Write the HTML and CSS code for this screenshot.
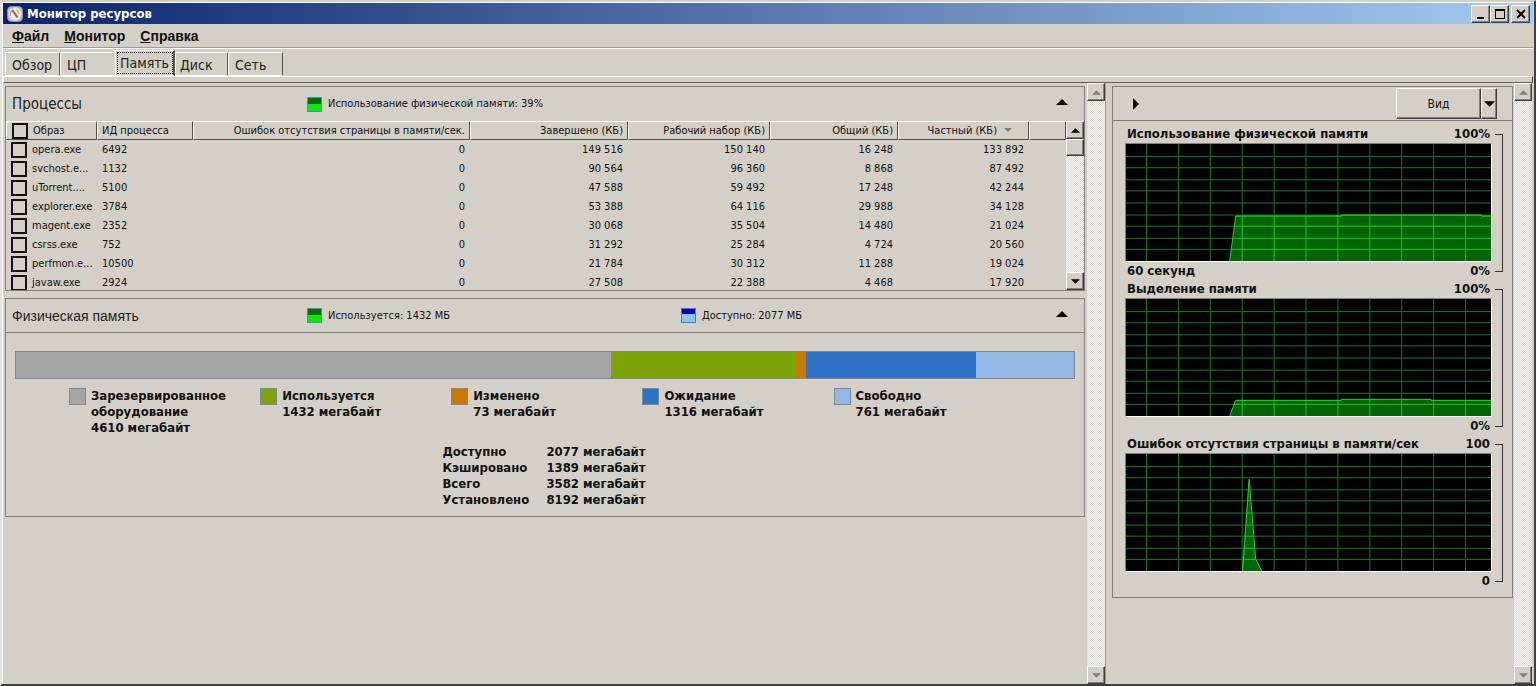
FILE: index.html
```html
<!DOCTYPE html>
<html lang="ru">
<head>
<meta charset="utf-8">
<title>Монитор ресурсов</title>
<link rel="stylesheet" href="styles.css">
</head>
<body>
<svg class="defs" aria-hidden="true">
  <defs>
    <path id="grid" vector-effect="non-scaling-stroke" d="M0 12.500H366M0 23.500H366M0 35.500H366M0 46.500H366M0 58.500H366M0 70.500H366M0 81.500H366M0 93.500H366M0 104.500H366M20.500 0V116M52.500 0V116M84.500 0V116M116.500 0V116M148.500 0V116M180.500 0V116M212.500 0V116M244.500 0V116M276.500 0V116M308.500 0V116M340.500 0V116"/>
    <symbol id="up" viewBox="0 0 10 5"><path d="M0 5 5 0l5 5z"/></symbol>
    <symbol id="down" viewBox="0 0 10 5"><path d="M0 0h10L5 5z"/></symbol>
  </defs>
</svg>
<div class="window">
  <header class="titlebar">
    <svg class="app-icon" viewBox="0 0 16 16" aria-hidden="true">
      <rect x="0.500" y="0.500" width="15" height="15" rx="4" fill="#b9bfc9" stroke="#8790a4"/>
      <circle cx="8" cy="8" r="6.300" fill="#f4efec" stroke="#d8d8dc"/>
      <path d="M3.500 10A5 5 0 0 1 6 3.800" fill="none" stroke="#9c9da3" stroke-width="1.500"/>
      <path d="M6 3.500 11.500 11l-2 1L4.800 5z" fill="#b4533d"/>
      <path d="M9 4q3 1 3 4" fill="none" stroke="#d9ad9b" stroke-width="1.500"/>
    </svg>
    <h1 class="title">Монитор ресурсов</h1>
    <div class="window-buttons">
      <button class="raised win-btn" aria-label="Свернуть"><svg viewBox="0 0 12 12"><path d="M2 9h7v2H2z"/></svg></button>
      <button class="raised win-btn" aria-label="Развернуть"><svg viewBox="0 0 12 12"><path fill-rule="evenodd" d="M1 1h10v10H1zM2 3v7h8V3z"/></svg></button>
      <button class="raised win-btn win-close" aria-label="Закрыть"><svg viewBox="0 0 12 12"><path d="M2 2 10 10M10 2 2 10" fill="none" stroke="#000" stroke-width="2"/></svg></button>
    </div>
  </header>
  <nav class="menu" aria-label="Меню">
    <button class="menu-item"><u>Ф</u>айл</button>
    <button class="menu-item"><u>М</u>онитор</button>
    <button class="menu-item"><u>С</u>правка</button>
  </nav>
  <div class="tabs" role="tablist">
    <button class="tab" role="tab">Обзор</button>
    <button class="tab tab-cpu" role="tab">ЦП</button>
    <button class="tab tab-active" role="tab" aria-selected="true">Память</button>
    <button class="tab tab-disk" role="tab">Диск</button>
    <button class="tab" role="tab">Сеть</button>
  </div>
  <div class="tab-edge"></div>
  <main class="content">
    <div class="left">
      <section class="panel">
        <header class="panel-head">
          <h2 class="panel-title">Процессы</h2>
          <span class="metric"><i class="meter"></i>Использование физической памяти: 39%</span>
          <button class="collapse" aria-label="Свернуть процессы"><svg><use href="#up"/></svg></button>
        </header>
        <div class="list">
          <div class="table-clip">
          <table class="processes">
            <colgroup><col class="c-image"><col class="c-pid"><col class="c-faults"><col class="c-commit"><col class="c-set"><col class="c-shared"><col class="c-private"><col></colgroup>
            <thead><tr>
              <th class="text"><label class="pick"><input type="checkbox">Образ</label></th>
              <th class="text">ИД процесса</th>
              <th>Ошибок отсутствия страницы в памяти/сек.</th>
              <th>Завершено (КБ)</th>
              <th>Рабочий набор (КБ)</th>
              <th>Общий (КБ)</th>
              <th class="sorted">Частный (КБ)<svg class="sort"><use href="#down"/></svg></th>
              <th></th>
            </tr></thead>
            <tbody>
              <tr><td class="text"><label class="pick"><input type="checkbox">opera.exe</label></td><td class="text">6492</td><td>0</td><td>149 516</td><td>150 140</td><td>16 248</td><td>133 892</td><td></td></tr>
              <tr><td class="text"><label class="pick"><input type="checkbox">svchost.e...</label></td><td class="text">1132</td><td>0</td><td>90 564</td><td>96 360</td><td>8 868</td><td>87 492</td><td></td></tr>
              <tr><td class="text"><label class="pick"><input type="checkbox">uTorrent....</label></td><td class="text">5100</td><td>0</td><td>47 588</td><td>59 492</td><td>17 248</td><td>42 244</td><td></td></tr>
              <tr><td class="text"><label class="pick"><input type="checkbox">explorer.exe</label></td><td class="text">3784</td><td>0</td><td>53 388</td><td>64 116</td><td>29 988</td><td>34 128</td><td></td></tr>
              <tr><td class="text"><label class="pick"><input type="checkbox">magent.exe</label></td><td class="text">2352</td><td>0</td><td>30 068</td><td>35 504</td><td>14 480</td><td>21 024</td><td></td></tr>
              <tr><td class="text"><label class="pick"><input type="checkbox">csrss.exe</label></td><td class="text">752</td><td>0</td><td>31 292</td><td>25 284</td><td>4 724</td><td>20 560</td><td></td></tr>
              <tr><td class="text"><label class="pick"><input type="checkbox">perfmon.e...</label></td><td class="text">10500</td><td>0</td><td>21 784</td><td>30 312</td><td>11 288</td><td>19 024</td><td></td></tr>
              <tr><td class="text"><label class="pick"><input type="checkbox">javaw.exe</label></td><td class="text">2924</td><td>0</td><td>27 508</td><td>22 388</td><td>4 468</td><td>17 920</td><td></td></tr>
            </tbody>
          </table>
          </div>
          <div class="scrollbar">
            <button class="raised scroll-btn" aria-label="Вверх"><svg><use href="#up"/></svg></button>
            <div class="raised thumb"></div>
            <button class="raised scroll-btn scroll-end" aria-label="Вниз"><svg><use href="#down"/></svg></button>
          </div>
        </div>
      </section>
      <section class="panel">
        <header class="panel-head ruled">
          <h2 class="panel-title title-arial">Физическая память</h2>
          <span class="metric"><i class="meter"></i>Используется: 1432 МБ</span>
          <span class="metric"><i class="meter meter-blue"></i>Доступно: 2077 МБ</span>
          <button class="collapse" aria-label="Свернуть физическую память"><svg><use href="#up"/></svg></button>
        </header>
        <div class="memory">
          <div class="bar">
            <div class="gray" style="flex-grow:4610"></div>
            <div class="green" style="flex-grow:1432"></div>
            <div class="orange" style="flex-grow:73"></div>
            <div class="blue" style="flex-grow:1316"></div>
            <div class="pale" style="flex-grow:761"></div>
          </div>
          <ul class="legend">
            <li><i class="swatch gray"></i><span>Зарезервированное<br>оборудование<br>4610 мегабайт</span></li>
            <li><i class="swatch green"></i><span>Используется<br>1432 мегабайт</span></li>
            <li><i class="swatch orange"></i><span>Изменено<br>73 мегабайт</span></li>
            <li><i class="swatch blue"></i><span>Ожидание<br>1316 мегабайт</span></li>
            <li><i class="swatch pale"></i><span>Свободно<br>761 мегабайт</span></li>
          </ul>
          <dl class="stats">
            <dt>Доступно</dt><dd>2077 мегабайт</dd>
            <dt>Кэшировано</dt><dd>1389 мегабайт</dd>
            <dt>Всего</dt><dd>3582 мегабайт</dd>
            <dt>Установлено</dt><dd>8192 мегабайт</dd>
          </dl>
        </div>
      </section>
    </div>
    <div class="scrollbar disabled">
      <button class="raised scroll-btn" disabled aria-label="Вверх"><svg><use href="#up"/></svg></button>
      <button class="raised scroll-btn scroll-end" disabled aria-label="Вниз"><svg><use href="#down"/></svg></button>
    </div>
    <div class="splitter"></div>
    <aside class="right">
      <section class="panel">
        <header class="panel-head ruled graph-head">
          <button class="expand" aria-label="Скрыть диаграммы"><svg viewBox="0 0 6 12"><path d="M0 0 6 6 0 12z"/></svg></button>
          <div class="view">
            <button class="raised view-btn">Вид</button>
            <button class="raised view-drop" aria-label="Размер диаграмм"><svg><use href="#down"/></svg></button>
          </div>
        </header>
        <div class="graphs">
          <figure class="graph">
            <figcaption class="graph-row"><span>Использование физической памяти</span><span>100%</span></figcaption>
            <svg class="chart" viewBox="0 0 366 116" preserveAspectRatio="none">
              <clipPath id="a1"><path d="M104 116 110 71H216V70H357V71H366V116z"/></clipPath>
              <use href="#grid" class="grid"/>
              <g clip-path="url(#a1)"><rect class="area" width="366" height="116"/><use href="#grid" class="grid-lit"/></g>
              <path class="trace" d="M104 116 110 71.500H216V70.500H357V71.500H366"/>
            </svg>
            <div class="graph-row"><span>60 секунд</span><span>0%</span></div>
            <i class="bracket"></i>
          </figure>
          <figure class="graph">
            <figcaption class="graph-row"><span>Выделение памяти</span><span>100%</span></figcaption>
            <svg class="chart" viewBox="0 0 366 116" preserveAspectRatio="none">
              <clipPath id="a2"><path d="M104 116 110 100H216V99H306V100H366V116z"/></clipPath>
              <use href="#grid" class="grid"/>
              <g clip-path="url(#a2)"><rect class="area" width="366" height="116"/><use href="#grid" class="grid-lit"/></g>
              <path class="trace" d="M104 116 110 100.500H216V99.500H306V100.500H366"/>
            </svg>
            <div class="graph-row"><span></span><span>0%</span></div>
            <i class="bracket"></i>
          </figure>
          <figure class="graph">
            <figcaption class="graph-row"><span>Ошибок отсутствия страницы в памяти/сек</span><span>100</span></figcaption>
            <svg class="chart" viewBox="0 0 366 116" preserveAspectRatio="none">
              <clipPath id="a3"><path d="M116 116 123 25 130 104 136 116z"/></clipPath>
              <use href="#grid" class="grid"/>
              <g clip-path="url(#a3)"><rect class="area" width="366" height="116"/><use href="#grid" class="grid-lit"/></g>
              <path class="trace" d="M117 116 123.500 25 130 104 136 116"/>
            </svg>
            <div class="graph-row"><span></span><span>0</span></div>
            <i class="bracket"></i>
          </figure>
        </div>
      </section>
    </aside>
    <div class="scrollbar disabled">
      <button class="raised scroll-btn" disabled aria-label="Вверх"><svg><use href="#up"/></svg></button>
      <button class="raised scroll-btn scroll-end" disabled aria-label="Вниз"><svg><use href="#down"/></svg></button>
    </div>
  </main>
</div>
</body>
</html>
```
FILE: styles.css
```css
* { box-sizing: border-box; }
body {
  margin: 0;
  background: #d4d0c8;
  color: #111;
  font: 11px/16px "DejaVu Sans Condensed", "Noto Sans", sans-serif;
}
h1, h2, ul, dl, dd, figure { margin: 0; padding: 0; }
button { margin: 0; padding: 0; border: 0; background: none; color: inherit; font: inherit; }
svg { display: block; }
.defs { position: absolute; width: 0; height: 0; }

.window {
  display: flex;
  flex-direction: column;
  min-height: 100vh;
  padding: 1px 1px 0;
  border: 2px solid #404040;
  border-top-color: #d4d0c8;
  border-left-color: #e4e2dc;
  box-shadow: inset 1px 1px #fff;
}
.raised {
  display: grid;
  place-items: center;
  background: #d4d0c8;
  border: 1px solid;
  border-color: #fff #404040 #404040 #fff;
  box-shadow: inset -1px -1px #808080;
}

.titlebar {
  display: flex;
  align-items: center;
  height: 21px;
  padding: 0 3px 0 4px;
  gap: 4px;
  background: linear-gradient(90deg, #0a246a, #a6caf0);
}
.app-icon { width: 16px; height: 16px; }
.title { flex: 1; color: #fff; font-size: 13px; font-weight: bold; }
.window-buttons { display: flex; }
.win-btn { width: 19px; height: 18px; }
.win-btn svg { width: 12px; height: 12px; }
.win-close { margin-left: 2px; }

.menu {
  display: flex;
  gap: 15px;
  height: 24px;
  padding: 0 9px;
  border-bottom: 1px solid #a09c94;
  box-shadow: 0 1px #fff;
  font: bold 14px/22px "Liberation Sans", sans-serif;
}
.menu-item { height: 24px; }

.tabs {
  display: flex;
  align-items: flex-end;
  height: 28px;
  padding-left: 2px;
  color: #222;
  font-size: 14px;
}
.tab {
  height: 24px;
  min-width: 55px;
  padding: 2px 6px 0;
  border: 1px solid;
  border-color: #fff #555 #fff #fff;
  text-align: left;
}
.tab-cpu { border-right-color: transparent; }
.tab-active {
  height: 26px;
  min-width: 60px;
  padding: 0;
  border-right-width: 2px;
  text-align: center;
  outline: 1px dotted #000;
  outline-offset: -3px;
}
.tab-disk { min-width: 53px; padding: 2px 4px 0; }
.tab-edge {
  height: 7px;
  border: 1px solid;
  border-color: #fff #404040 #606060 #fff;
}

.content { flex: 1; display: flex; padding-right: 1px; }
.left { flex: 1; min-width: 0; padding: 3px 2px 0; display: flex; flex-direction: column; gap: 7px; }
.splitter { width: 5px; border-left: 1px solid #a09c94; }
.right { width: 27%; max-width: 404px; padding: 3px 1px 0 2px; }
.panel { border: 1px solid #808080; }

.panel-head {
  display: grid;
  grid-template-columns: 295px 374px 1fr auto;
  align-items: center;
  height: 34px;
  padding: 0 16px 0 6px;
}
.ruled { border-bottom: 1px solid #808080; }
.panel-title { font-size: 15px; font-weight: normal; color: #222; }
.title-arial { font-family: "Liberation Sans", sans-serif; font-size: 14px; }
.metric { display: flex; align-items: center; gap: 6px; }
.meter {
  width: 15px;
  height: 15px;
  border: 1px solid #3f9e93;
  background: linear-gradient(#076b07 50%, #0be60b 50%);
}
.meter-blue { border-color: #3b7fc0; background: linear-gradient(#0000b0 40%, #8cc4ff 40%); }
.collapse { grid-column: 4; height: 22px; padding-bottom: 4px; }
.collapse svg { width: 12px; height: 6px; }

.list { display: flex; height: 169px; }
.table-clip { flex: 1; min-width: 0; overflow: hidden; }
.processes { width: 100%; table-layout: fixed; border-collapse: separate; border-spacing: 0; }
.processes th, .processes td { padding: 0 5px; text-align: right; font-weight: normal; white-space: nowrap; }
.processes td { height: 19px; }
.processes th {
  height: 19px;
  border: 1px solid;
  border-color: #fff #505050 #505050 #fff;
  padding: 0 4px;
}
.processes .text { text-align: left; }
.processes .sorted { padding-right: 31px; }
.sorted { position: relative; }
.sort { position: absolute; right: 16px; top: 6px; width: 8px; height: 4px; fill: #808080; }
.processes .text:first-child { padding-left: 5px; }
.c-image { width: 91px; }
.c-pid { width: 96px; }
.c-faults { width: 277px; }
.c-commit { width: 158px; }
.c-set { width: 142px; }
.c-shared { width: 128px; }
.c-private { width: 131px; }
.pick { display: flex; align-items: center; gap: 5px; }
.pick input {
  appearance: none;
  flex: none;
  width: 16px;
  height: 16px;
  margin: 0;
  border: 2px solid #111;
}

.scrollbar {
  display: flex;
  flex-direction: column;
  width: 18px;
  background: repeating-conic-gradient(#f4f3f0 0 25%, #dedbd5 0 50%) 0 0 / 2px 2px;
}
.scroll-btn { width: 18px; height: 18px; }
.scroll-btn svg { width: 9px; height: 5px; }
.scroll-end { margin-top: auto; }
.thumb { height: 17px; }
.disabled svg { fill: #808080; }

.memory { padding: 18px 9px 8px; font-size: 13px; font-weight: bold; line-height: 16px; }
.bar { display: flex; height: 28px; border: 1px solid #808a90; }
.bar div { flex: 0 1 0; }
.gray { background: #a5a5a5; }
.green { background: #7ea20a; }
.orange { background: #c87904; }
.blue { background: #2f73c8; }
.pale { background: #94b8e4; }
.legend {
  display: grid;
  grid-template-columns: repeat(5, 19%);
  margin: 9px 0 8px 54px;
  list-style: none;
}
.legend li { display: flex; gap: 5px; }
.swatch { flex: none; width: 17px; height: 17px; border: 1px solid #7d8b95; }
.stats { display: grid; grid-template-columns: 104px auto; justify-content: center; padding-right: 2px; }

.graph-head { display: flex; justify-content: space-between; padding: 0 15px 0 20px; }
.expand svg { width: 6px; height: 12px; }
.view { display: flex; font-size: 12px; }
.view-btn { width: 85px; height: 31px; }
.view-drop { width: 16px; height: 31px; }
.view-drop svg { width: 11px; height: 6px; }
.graphs { padding: 4px 9px 7px 12px; font-size: 13px; font-weight: bold; }
.graph { position: relative; padding-right: 11px; }
.graph-row { display: flex; justify-content: space-between; height: 18px; padding: 1px 2px; white-space: nowrap; }
.chart {
  width: 100%;
  height: 119px;
  background: #000;
  border: 1px solid;
  border-color: #808080 #fff #fff #808080;
}
.grid { stroke: #1c7430; fill: none; }
.grid-lit { stroke: #22c022; fill: none; }
.area { fill: #006400; }
.trace { fill: none; stroke: #2ad02a; vector-effect: non-scaling-stroke; }
.bracket {
  position: absolute;
  top: 9px;
  bottom: 8px;
  right: 0;
  width: 8px;
  border: 1px solid #333;
  border-left: 0;
}
```
